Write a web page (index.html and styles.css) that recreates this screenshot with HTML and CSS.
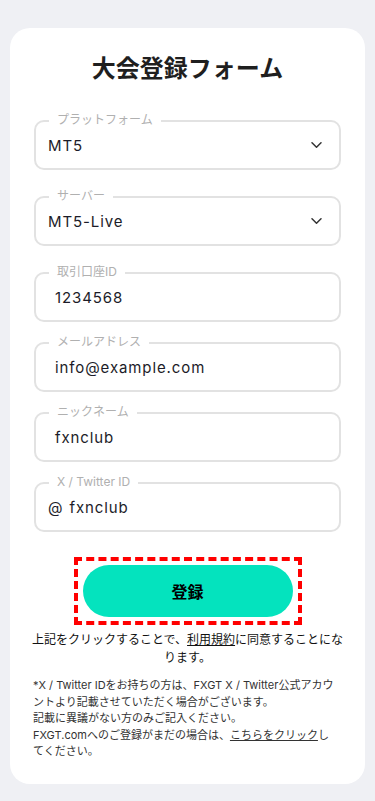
FILE: index.html
```html
<!DOCTYPE html>
<html lang="ja">
<head>
<meta charset="utf-8">
<meta name="viewport" content="width=device-width, initial-scale=1">
<title>大会登録フォーム</title>
<link rel="stylesheet" href="styles.css">
</head>
<body>
<main class="card">
  <h1 class="title">大会登録フォーム</h1>
  <form class="form">
    <div class="field field-select">
      <span class="field-label">プラットフォーム</span>
      <span class="field-value">MT5</span>
      <svg class="chevron" width="11" height="6" viewBox="0 0 11 6" aria-hidden="true"><path d="M1 0.8l4.5 4.4 4.5-4.4"/></svg>
    </div>
    <div class="field field-select">
      <span class="field-label">サーバー</span>
      <span class="field-value">MT5-Live</span>
      <svg class="chevron" width="11" height="6" viewBox="0 0 11 6" aria-hidden="true"><path d="M1 0.8l4.5 4.4 4.5-4.4"/></svg>
    </div>
    <div class="field field-input">
      <span class="field-label">取引口座ID</span>
      <span class="field-value">1234568</span>
    </div>
    <div class="field field-input">
      <span class="field-label">メールアドレス</span>
      <span class="field-value">info@example.com</span>
    </div>
    <div class="field field-input">
      <span class="field-label">ニックネーム</span>
      <span class="field-value">fxnclub</span>
    </div>
    <div class="field field-prefix">
      <span class="field-label">X / Twitter ID</span>
      <span class="prefix">@</span>
      <span class="field-value">fxnclub</span>
    </div>
  </form>
  <div class="submit-wrap">
    <button class="submit" type="button">登録</button>
  </div>
  <p class="agree">上記をクリックすることで、<a class="link" href="#">利用規約</a>に同意することになります。</p>
  <p class="notes">*X / Twitter IDをお持ちの方は、FXGT X / Twitter公式アカウントより記載させていただく場合がございます。<br>記載に異議がない方のみご記入ください。<br>FXGT.comへのご登録がまだの場合は、<a class="link" href="#">こちらをクリック</a>し<br>てください。</p>
</main>
</body>
</html>
```

FILE: styles.css
```css
* {
  box-sizing: border-box;
}

html, body {
  margin: 0;
  padding: 0;
}

body {
  background: #eff0f4;
  font-family: "Inter", "Noto Sans CJK JP", sans-serif;
  color: #1a1a1a;
  padding: 28px 10px 18px;
}

.card {
  background: #ffffff;
  border-radius: 20px;
  padding: 21px 24px 24px;
}

.title {
  margin: 0;
  font-family: "Noto Sans CJK JP", sans-serif;
  font-size: 24px;
  line-height: 36px;
  font-weight: 700;
  text-align: center;
  color: #1f1f1f;
}

.form {
  display: flex;
  flex-direction: column;
  gap: 20px;
  margin-top: 35px;
}

.field {
  position: relative;
  display: flex;
  align-items: center;
  height: 50px;
  border: 2px solid #e2e2e2;
  border-radius: 10px;
  padding: 0 19px;
}

.field-select {
  padding: 0 16px 0 12px;
  margin-bottom: 6px;
}

.field-prefix {
  padding-left: 12px;
}

.field-label {
  position: absolute;
  top: -10px;
  left: 13px;
  padding: 0 8px;
  background: #ffffff;
  font-family: "Inter", "Noto Sans CJK JP", sans-serif;
  font-size: 12px;
  line-height: 16px;
  color: #b0b0b0;
}

.field-value {
  flex: 1;
  font-size: 15px;
  letter-spacing: 0.9px;
  color: #1c1c28;
}

.prefix {
  font-size: 15px;
  color: #1c1c28;
  margin-right: 7px;
}

.chevron {
  fill: none;
  stroke: #333;
  stroke-width: 1.5;
  stroke-linecap: round;
  stroke-linejoin: round;
  margin-right: 1px;
}

.submit-wrap {
  width: fit-content;
  margin: 25px auto 0;
  padding: 4px 5px;
  border: 4px dashed #ff0000;
}

.submit {
  display: block;
  width: 210px;
  height: 52px;
  border: none;
  border-radius: 26px;
  background: #04e3be;
  font-family: "Noto Sans CJK JP", sans-serif;
  font-size: 16px;
  font-weight: 700;
  color: #000;
  cursor: pointer;
}

.agree {
  margin: 6px -4px 0;
  font-size: 12px;
  line-height: 18px;
  text-align: center;
  color: #111;
}

.link {
  color: inherit;
  text-decoration: underline;
}

.notes {
  margin: 10px -1px 0;
  font-size: 11px;
  line-height: 16.5px;
  color: #333;
}
```
